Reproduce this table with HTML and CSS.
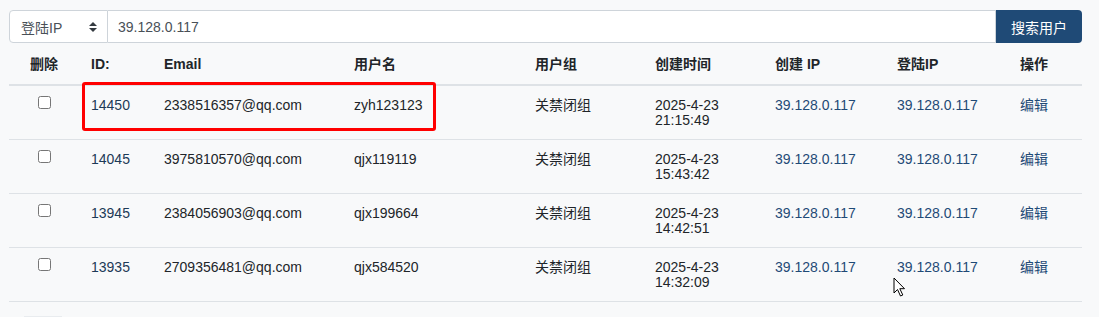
FILE: index.html
```html
<!DOCTYPE html>
<html lang="zh-CN">
<head>
<meta charset="utf-8">
<title>用户搜索</title>
<link rel="stylesheet" href="styles.css">
</head>
<body>
<div class="page">
  <form class="search">
    <div class="select">
      <span>登陆IP</span>
      <svg class="caret" width="8" height="10" viewBox="0 0 8 10"><path d="M4 0 L8 4 H0 Z M0 6 H8 L4 10 Z" fill="#343a40"/></svg>
    </div>
    <div class="input">39.128.0.117</div>
    <button type="button" class="btn">搜索用户</button>
  </form>

  <table class="users">
    <colgroup>
      <col class="c-del"><col class="c-id"><col class="c-mail"><col class="c-name"><col class="c-grp"><col class="c-time"><col class="c-cip"><col class="c-lip"><col class="c-op">
    </colgroup>
    <thead>
      <tr>
        <th class="center">删除</th><th>ID:</th><th>Email</th><th>用户名</th><th>用户组</th><th>创建时间</th><th>创建 IP</th><th>登陆IP</th><th>操作</th>
      </tr>
    </thead>
    <tbody>
      <tr>
        <td class="center"><input type="checkbox"></td><td class="id">14450</td><td>2338516357@qq.com</td><td>zyh123123</td><td>关禁闭组</td><td>2025-4-23 21:15:49</td><td class="link">39.128.0.117</td><td class="link">39.128.0.117</td><td class="link">编辑</td>
      </tr>
      <tr>
        <td class="center"><input type="checkbox"></td><td class="id">14045</td><td>3975810570@qq.com</td><td>qjx119119</td><td>关禁闭组</td><td>2025-4-23 15:43:42</td><td class="link">39.128.0.117</td><td class="link">39.128.0.117</td><td class="link">编辑</td>
      </tr>
      <tr>
        <td class="center"><input type="checkbox"></td><td class="id">13945</td><td>2384056903@qq.com</td><td>qjx199664</td><td>关禁闭组</td><td>2025-4-23 14:42:51</td><td class="link">39.128.0.117</td><td class="link">39.128.0.117</td><td class="link">编辑</td>
      </tr>
      <tr>
        <td class="center"><input type="checkbox"></td><td class="id">13935</td><td>2709356481@qq.com</td><td>qjx584520</td><td>关禁闭组</td><td>2025-4-23 14:32:09</td><td class="link">39.128.0.117</td><td class="link">39.128.0.117</td><td class="link">编辑</td>
      </tr>
    </tbody>
  </table>
  <div class="pager-stub"></div>

  <div class="highlight"></div>
  <svg class="cursor" width="14" height="21" viewBox="0 0 14 21"><path d="M1 1 V16 L4.5 12.5 L7.5 19 L9.8 18 L6.8 11.7 H11.5 Z" fill="#fff" stroke="#000" stroke-width="1" stroke-linejoin="round"/></svg>
</div>
</body>
</html>
```

FILE: styles.css
```css
html, body {
  margin: 0;
  padding: 0;
  background: #f8f9fa;
}
body {
  font-family: "Liberation Sans", Arial, "Noto Sans CJK SC", sans-serif;
  font-size: 14px;
  color: #212529;
}
.page {
  position: relative;
  padding: 10px 17px 0 9px;
  height: 317px;
  box-sizing: border-box;
  overflow: hidden;
}
.search {
  display: flex;
  height: 33px;
  margin: 0;
}
.select {
  width: 99px;
  box-sizing: border-box;
  display: flex;
  align-items: center;
  justify-content: space-between;
  padding: 0 10px 0 11px;
  background: #fff;
  border: 1px solid #ced4da;
  border-radius: 4px 0 0 4px;
  color: #495057;
}
.caret { display: block; }
.input {
  flex: 1;
  display: flex;
  align-items: center;
  padding: 0 10px;
  background: #fff;
  border: 1px solid #ced4da;
  border-left: none;
  color: #495057;
}
.btn {
  width: 86px;
  border: none;
  border-radius: 0 4px 4px 0;
  background: #1f4a76;
  color: #fff;
  font-family: "Liberation Sans", Arial, "Noto Sans CJK SC", sans-serif;
  font-size: 14px;
  padding: 0;
}
.users {
  width: 1073px;
  border-collapse: collapse;
  table-layout: fixed;
}
.c-del { width: 70px; }
.c-id { width: 73px; }
.c-mail { width: 190px; }
.c-name { width: 181px; }
.c-grp { width: 120px; }
.c-time { width: 120px; }
.c-cip { width: 122px; }
.c-lip { width: 123px; }
.c-op { width: 74px; }
.users th {
  text-align: left;
  font-weight: bold;
  padding: 13px 12px 11px;
  line-height: 17px;
  border-bottom: 2px solid #dee2e6;
}
.users td {
  vertical-align: top;
  padding: 12px 12px 11px;
  line-height: 15px;
  border-bottom: 1px solid #dee2e6;
}
.users .center { text-align: center; }
.users td.center { padding-top: 10px; }
.users input[type="checkbox"] {
  margin: 0;
  width: 13px;
  height: 13px;
  vertical-align: top;
}
.id { color: #1d3a57; }
.link { color: #1f4a76; }
.pager-stub {
  width: 38px;
  height: 6px;
  margin: 14px 0 0 15px;
  border-top: 1px solid #e9ecef;
  background: #f1f3f5;
}
.highlight {
  position: absolute;
  left: 82px;
  top: 82px;
  width: 354px;
  height: 49px;
  box-sizing: border-box;
  border: 3px solid #ff0000;
  border-radius: 3px;
}
.cursor {
  position: absolute;
  left: 893px;
  top: 277px;
}
```
